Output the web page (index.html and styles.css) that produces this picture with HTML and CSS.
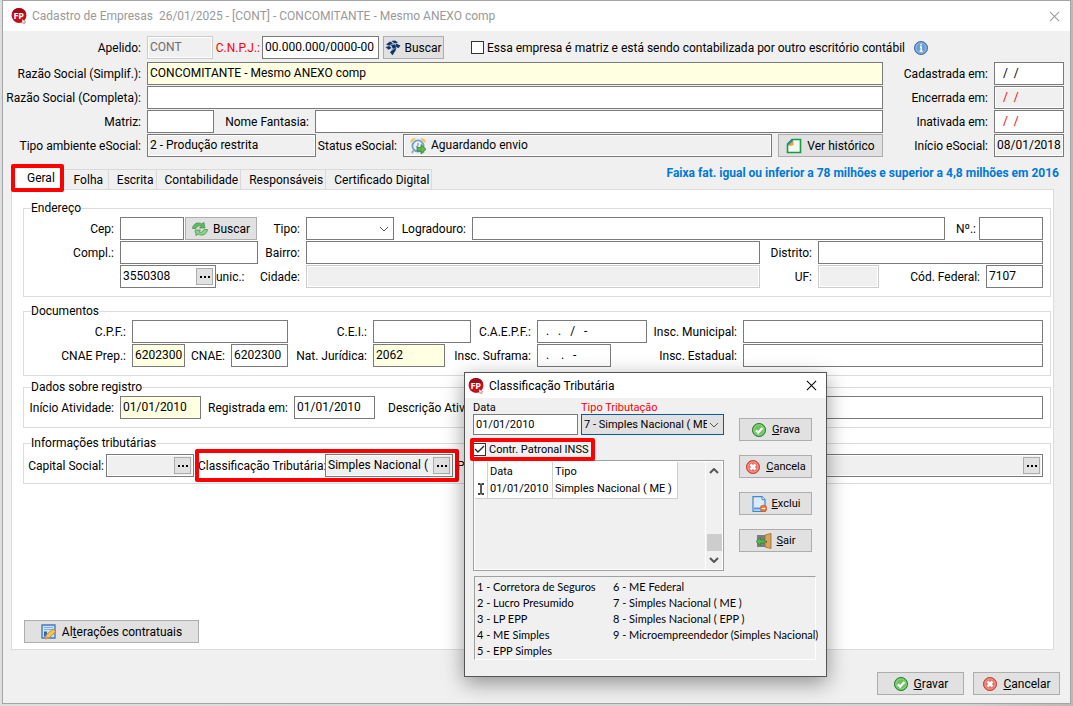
FILE: index.html
```
<!DOCTYPE html>
<html lang="pt-BR">

<head>
  <meta charset="UTF-8" />
  <meta name="viewport" content="width=device-width, initial-scale=1.0" />
  <title>Cadastro de Empresas</title>
  <link rel="stylesheet" href="styles.css">
</head>

<body>
  <!-- Shared icons -->
  <svg class="sprite" aria-hidden="true">
    <symbol id="logo" viewBox="0 0 16 16">
      <circle cx="8" cy="7.6" r="7.4" fill="#c4101c" />
      <path d="M1 5a7.400 7.400 0 0 1 14 0" fill="#a00c16" />
      <text x="2.400" y="11" font-family="Open Sans" font-weight="bold" font-size="9" fill="#fff">FP</text>
      <path d="M11 11l4 3-2 .2 1 1.600-1.200.2-.8-1.600-1 1z" fill="#fff" stroke="#a33" stroke-width=".4" />
    </symbol>
    <symbol id="ok" viewBox="0 0 16 16">
      <circle cx="8" cy="8" r="6.600" fill="#4fae46" stroke="#2f8a35" />
      <circle cx="8" cy="8" r="5.200" fill="#6cc25c" stroke="#a5dc98" stroke-width=".8" />
      <path d="M4.800 8.200l2.400 2.400 4.200-4.600" fill="none" stroke="#fff" stroke-width="2.200" />
    </symbol>
    <symbol id="cancel" viewBox="0 0 16 16">
      <circle cx="8" cy="8" r="6.600" fill="#e2574c" stroke="#cf4a42" />
      <circle cx="8" cy="8" r="5.200" fill="#ea6c60" stroke="#f6b0a8" stroke-width=".8" />
      <path d="M5.500 5.500l5 5M10.500 5.500l-5 5" stroke="#fff" stroke-width="2.600" />
    </symbol>
    <symbol id="close" viewBox="0 0 12 12">
      <path d="M1 1l10 10M11 1L1 11" fill="none" stroke="currentColor" stroke-width="1.100" />
    </symbol>
  </svg>

  <main class="window">
    <header class="titlebar">
      <svg class="icon"><use href="#logo" /></svg>
      <h1>Cadastro de Empresas&nbsp; 26/01/2025 - [CONT] - CONCOMITANTE - Mesmo ANEXO comp</h1>
      <button class="close" aria-label="Fechar"><svg><use href="#close" /></svg></button>
    </header>

    <section class="company">
      <div class="row row-id">
        <label for="apelido">Apelido:</label>
        <input id="apelido" value="CONT" disabled>
        <label for="cnpj" class="required">C.N.P.J.:</label>
        <input id="cnpj" value="00.000.000/0000-00">
        <button class="btn">
          <svg class="icon" viewBox="0 0 16 16">
            <path d="M1 4.500l4-3 3 1.800-4 2.400zM6.200 1l3.800-.6 3 2.200-3 .9zM11 3.600l4.500 2-2 2.600-3-1.600zM.5 7l4-1 2 2-3 1.800zM6 5l4-.8 1 3.800-3 1zM7 10.200l4.500-2.400-1 3-3 4.400-2.500-3z" fill="#12356b" />
            <path d="M4 6l5-3M6 10l5-2" stroke="#4f7fb0" stroke-width=".6" />
          </svg>
          Buscar
        </button>
        <span class="check">
          <input type="checkbox" id="matrizOutro">
          <label for="matrizOutro">Essa empresa é matriz e está sendo contabilizada por outro escritório contábil</label>
          <svg class="info" viewBox="0 0 14 14">
            <circle cx="7" cy="7" r="6.500" fill="#4c83bd" stroke="#3a6ba3" />
            <circle cx="7" cy="7" r="5.300" fill="#6ca0d5" stroke="#b4d0ee" stroke-width=".7" />
            <path d="M7 3v1.600M6 6h1.200v4M5.600 10.200h3" fill="none" stroke="#fff" stroke-width="1.500" />
          </svg>
        </span>
      </div>

      <div class="company-grid">
        <div class="rows">
          <div class="row row-razao">
            <label for="razao">Razão Social (Simplif.):</label>
            <input id="razao" class="key" value="CONCOMITANTE - Mesmo ANEXO comp">
          </div>
          <div class="row row-razao">
            <label for="razaoCompleta">Razão Social (Completa):</label>
            <input id="razaoCompleta">
          </div>
          <div class="row row-matriz">
            <label for="matriz">Matriz:</label>
            <input id="matriz">
            <label for="fantasia">Nome Fantasia:</label>
            <input id="fantasia">
          </div>
          <div class="row row-esocial">
            <label for="ambiente">Tipo ambiente eSocial:</label>
            <input id="ambiente" class="locked" value="2 - Produção restrita" readonly>
            <label for="status">Status eSocial:</label>
            <div class="box locked status">
              <svg class="icon" viewBox="0 0 16 16">
                <path d="M.5 5a4 4 0 0 1 5.500-4.500zM15.500 5a4 4 0 0 0-5.500-4.500z" fill="#f3c14b" />
                <path d="M3.500 12.500L2 15M12 13l2 2" stroke="#aaa" stroke-width="2" />
                <circle cx="8" cy="8" r="5.600" fill="#e6f1fa" stroke="#6d9fcd" stroke-width="1.800" />
                <path d="M8 5v3l-2 1" fill="none" stroke="#879" />
                <path d="M7 9.500h4v-3l5 4.800-5 4.700v-3H7z" fill="#5eb84a" stroke="#2f8330" stroke-width=".8" />
              </svg>
              <input id="status" value="Aguardando envio" readonly>
            </div>
            <button class="btn">
              <svg class="icon" viewBox="0 0 16 16">
                <path d="M6 1.500h8.500v13h-13V6z" fill="#f2f8ee" stroke="#149b44" stroke-width="1.600" />
                <path d="M1 7L7 1v3L4 7z" fill="#2f80c5" />
                <path d="M2 7.500l5.500-5v4.500l-3 1z" fill="#e7a23c" />
              </svg>
              Ver histórico
            </button>
          </div>
        </div>
        <div class="rows">
          <div class="row row-date"><label for="cadastrada">Cadastrada em:</label><input id="cadastrada" value="  /  /"></div>
          <div class="row row-date"><label for="encerrada">Encerrada em:</label><input id="encerrada" class="locked red" value="  /  /" readonly></div>
          <div class="row row-date"><label for="inativada">Inativada em:</label><input id="inativada" class="red" value="  /  /"></div>
          <div class="row row-date"><label for="inicioEsocial">Início eSocial:</label><input id="inicioEsocial" class="locked" value="08/01/2018" readonly></div>
        </div>
      </div>
    </section>

    <div class="tabs-bar">
      <div class="tabs" role="tablist">
        <button class="tab active marked" role="tab">Geral</button>
        <button class="tab" role="tab">Folha</button>
        <button class="tab" role="tab">Escrita</button>
        <button class="tab" role="tab">Contabilidade</button>
        <button class="tab" role="tab">Responsáveis</button>
        <button class="tab" role="tab">Certificado Digital</button>
      </div>
      <p class="range">Faixa fat. igual ou inferior a 78 milhões e superior a 4,8 milhões em 2016</p>
    </div>

    <section class="panel">
      <fieldset>
        <legend>Endereço</legend>
        <div class="row row-cep">
          <label for="cep">Cep:</label>
          <input id="cep">
          <button class="btn">
            <svg class="icon" viewBox="0 0 16 16">
              <path d="M.5 7.500C1 2.500 6 .5 10 3l1.800-1.800L13 7H7.500l1.600-1.800C7 4.200 5 5 4 7.500z" fill="#62b865" stroke="#3d9146" stroke-width=".7" />
              <path d="M15.500 8.500c-.5 5-5.500 7-9.500 4.500l-1.800 1.800L3 9h5.500l-1.600 1.800c2.100 1 4.100.2 5.100-2.300z" fill="#8bd08a" stroke="#3d9146" stroke-width=".7" />
            </svg>
            Buscar
          </button>
          <label for="tipo">Tipo:</label>
          <select id="tipo"><option></option></select>
          <label for="logradouro">Logradouro:</label>
          <input id="logradouro">
          <label for="numero">Nº.:</label>
          <input id="numero">
        </div>
        <div class="row row-bairro">
          <label for="compl">Compl.:</label>
          <input id="compl">
          <label for="bairro">Bairro:</label>
          <input id="bairro">
          <label for="distrito">Distrito:</label>
          <input id="distrito">
        </div>
        <div class="row row-cidade">
          <div class="box lookup"><input id="munic" value="3550308"><button class="dots" aria-label="Pesquisar município"></button></div>
          <label for="munic" class="munic">unic.:</label>
          <label for="cidade">Cidade:</label>
          <input id="cidade" disabled>
          <label for="uf">UF:</label>
          <input id="uf" disabled>
          <label for="codFederal">Cód. Federal:</label>
          <input id="codFederal" value="7107">
        </div>
      </fieldset>

      <fieldset class="documents">
        <legend>Documentos</legend>
        <div class="row row-cpf">
          <label for="cpf">C.P.F.:</label>
          <input id="cpf">
          <label for="cei">C.E.I.:</label>
          <input id="cei">
          <label for="caepf">C.A.E.P.F.:</label>
          <input id="caepf" value="  .   .   /   -">
          <label for="inscMunicipal">Insc. Municipal:</label>
          <input id="inscMunicipal">
        </div>
        <div class="row row-cnae">
          <label for="cnaePrep">CNAE Prep.:</label>
          <input id="cnaePrep" class="key" value="6202300">
          <label for="cnae">CNAE:</label>
          <input id="cnae" value="6202300">
          <label for="natureza">Nat. Jurídica:</label>
          <input id="natureza" class="key" value="2062">
          <label for="suframa">Insc. Suframa:</label>
          <input id="suframa" value="  .    .   -">
          <label for="inscEstadual">Insc. Estadual:</label>
          <input id="inscEstadual">
        </div>
      </fieldset>

      <fieldset class="registry">
        <legend>Dados sobre registro</legend>
        <div class="row row-registro">
          <label for="inicioAtividade">Início Atividade:</label>
          <input id="inicioAtividade" class="key" value="01/01/2010">
          <label for="registrada">Registrada em:</label>
          <input id="registrada" value="01/01/2010">
          <label for="descricao" class="start">Descrição Atividade:</label>
          <input id="descricao">
        </div>
      </fieldset>

      <fieldset class="taxes">
        <legend>Informações tributárias</legend>
        <div class="row row-tributos">
          <label for="capital">Capital Social:</label>
          <div class="box locked lookup"><input id="capital" readonly><button class="dots" aria-label="Capital social"></button></div>
          <div class="classif marked">
            <label for="classificacao">Classificação Tributária:</label>
            <div class="box locked lookup"><input id="classificacao" value="Simples Nacional (" readonly><button class="dots" aria-label="Classificação tributária"></button></div>
          </div>
          <label for="porte" class="start">Porte:</label>
          <div class="box locked lookup"><input id="porte" readonly><button class="dots" aria-label="Porte"></button></div>
        </div>
      </fieldset>

      <button class="btn changes">
        <svg class="icon" viewBox="0 0 16 16">
          <path d="M1 1h13v13H1z" fill="#cfe2f7" stroke="#3f7cc2" stroke-width="1.400" />
          <path d="M3 3.500h9M3 5.500h9" stroke="#83aedd" />
          <path d="M3 7.500h3v5H3z" fill="#2f66ad" />
          <path d="M4 15l1-4 7-6 3 2.500-7 6.500z" fill="#f7c54c" stroke="#b4762a" stroke-width=".8" />
          <path d="M4 15l1-4 3 3z" fill="#e39a76" />
        </svg>
        <span>Al<u>t</u>erações contratuais</span>
      </button>
    </section>

    <footer class="actions">
      <button class="btn"><svg class="icon"><use href="#ok" /></svg><span><u>G</u>ravar</span></button>
      <button class="btn"><svg class="icon"><use href="#cancel" /></svg><span><u>C</u>ancelar</span></button>
    </footer>
  </main>

  <div class="dialog" role="dialog" aria-labelledby="dialogTitle">
    <header class="titlebar">
      <svg class="icon"><use href="#logo" /></svg>
      <h2 id="dialogTitle">Classificação Tributária</h2>
      <button class="close" aria-label="Fechar"><svg><use href="#close" /></svg></button>
    </header>
    <div class="dialog-body">
      <div class="dialog-form">
        <div class="dialog-fields">
          <label for="dlgData">Data</label>
          <label for="dlgTipo" class="required">Tipo Tributação</label>
          <input id="dlgData" value="01/01/2010">
          <select id="dlgTipo"><option>7 - Simples Nacional ( ME )</option></select>
        </div>
        <span class="check marked">
          <input type="checkbox" id="patronal" checked>
          <label for="patronal">Contr. Patronal INSS</label>
        </span>
        <div class="history">
          <table>
            <tr><td></td><th>Data</th><th>Tipo</th></tr>
            <tr>
              <td><svg viewBox="0 0 8 12"><path d="M1 1h2.500M4.500 1H7M4 1.500v9M1 11h2.500M4.500 11H7" fill="none" stroke="#000" stroke-width="1.300" /></svg></td>
              <td>01/01/2010</td>
              <td>Simples Nacional ( ME )</td>
            </tr>
          </table>
          <div class="scrollbar">
            <svg viewBox="0 0 10 6"><path d="M1 5l4-4 4 4" fill="none" stroke="#555" stroke-width="2" /></svg>
            <span class="thumb"></span>
            <svg viewBox="0 0 10 6"><path d="M1 1l4 4 4-4" fill="none" stroke="#555" stroke-width="2" /></svg>
          </div>
        </div>
      </div>
      <div class="dialog-buttons">
        <button class="btn"><svg class="icon"><use href="#ok" /></svg><span><u>G</u>rava</span></button>
        <button class="btn"><svg class="icon"><use href="#cancel" /></svg><span><u>C</u>ancela</span></button>
        <button class="btn">
          <svg class="icon" viewBox="0 0 16 16">
            <path d="M2 .7h9l3 3v11.600H2z" fill="#dcebfa" stroke="#3f85cf" stroke-width="1.200" />
            <path d="M11 .7v3h3" fill="#fff" stroke="#3f85cf" />
            <path d="M3 12.500h6" stroke="#4d9be8" stroke-width="2" />
            <circle cx="12.500" cy="12.500" r="3.300" fill="#ee7430" stroke="#c8551d" stroke-width=".6" />
            <path d="M10.700 12.500h3.600" stroke="#fff" stroke-width="1.300" />
          </svg>
          <span><u>E</u>xclui</span>
        </button>
        <button class="btn">
          <svg class="icon" viewBox="0 0 16 16">
            <path d="M1 2h10v12H1z" fill="#7b7f80" />
            <path d="M9 2l6-1.500v15L9 14z" fill="#d9a35d" stroke="#9a6a2e" stroke-width=".8" />
            <path d="M10.500 8v1.500" stroke="#6b431a" />
            <path d="M0 8.500l4.500-4V7H9v3H4.500v2.500z" fill="#54b84e" stroke="#2c8232" stroke-width=".7" />
          </svg>
          <span><u>S</u>air</span>
        </button>
      </div>
      <div class="codes">
        <ul>
          <li>1 - Corretora de Seguros</li>
          <li>2 - Lucro Presumido</li>
          <li>3 - LP EPP</li>
          <li>4 - ME Simples</li>
          <li>5 - EPP Simples</li>
        </ul>
        <ul>
          <li>6 - ME Federal</li>
          <li>7 - Simples Nacional ( ME )</li>
          <li>8 - Simples Nacional ( EPP )</li>
          <li>9 - Microempreendedor (Simples Nacional)</li>
        </ul>
      </div>
    </div>
  </div>
</body>

</html>
```
FILE: styles.css
```
* {
  box-sizing: border-box;
}

body {
  margin: 0;
  padding: 0 2px 2px;
  min-height: 100vh;
  display: flex;
  background: linear-gradient(to right, #dedede, #d2d2d2 90%, #bcb8b2);
  font-family: Roboto, "Noto Sans", sans-serif;
  font-size: 12px;
  line-height: 16px;
  color: #000;
}

input,
select,
button {
  font: inherit;
  color: inherit;
  margin: 0;
  border-radius: 0;
}

h1,
h2,
p,
ul {
  margin: 0;
  padding: 0;
  font-size: inherit;
  font-weight: normal;
}

.sprite {
  position: absolute;
  width: 0;
  height: 0;
}

.icon {
  width: 16px;
  height: 16px;
  flex: none;
}

/* Windows */
.window {
  flex: 1;
  display: flex;
  flex-direction: column;
  min-width: 0;
  border: 1px solid #a5a5a5;
  background: #f0f0f0;
}

.titlebar {
  display: flex;
  align-items: center;
  gap: 5px;
  height: 30px;
  padding: 0 10px 0 8px;
  background: #fff;
  color: #999;
}

.titlebar h1,
.titlebar h2 {
  flex: 1;
  white-space: nowrap;
}

.close {
  display: flex;
  padding: 0;
  border: none;
  background: none;
}

.close svg {
  width: 11px;
  height: 11px;
}

/* Form controls */
input,
select,
.box {
  width: 100%;
  min-width: 0;
  height: 23px;
  padding: 0 2px 1px;
  border: 1px solid #7a7a7a;
  background: #fff;
  white-space: pre;
}

.key {
  background: #ffffe1;
}

.locked,
input:disabled {
  background: #f0f0f0;
  box-shadow: inset 0 0 0 1px #fff;
}

input:disabled {
  border-color: #ccc;
  color: #6d6d6d;
}

.red,
.required {
  color: #f00;
}

.box {
  display: flex;
  align-items: center;
  gap: 5px;
  padding: 0 2px;
}

.box input {
  height: 19px;
  padding: 0 0 1px;
  border: none;
  background: none;
}

select {
  appearance: none;
  background: #fff url("data:image/svg+xml,%3Csvg xmlns='http://www.w3.org/2000/svg' width='10' height='6'%3E%3Cpath d='M1 1l4 4 4-4' fill='none' stroke='%23555'/%3E%3C/svg%3E") no-repeat right 4px center;
}

.btn {
  display: flex;
  align-items: center;
  justify-content: center;
  gap: 5px;
  height: 23px;
  padding: 0 2px;
  border: 1px solid #adadad;
  background: #e1e1e1;
  white-space: nowrap;
}

.dots {
  flex: none;
  width: 17px;
  height: 17px;
  padding: 0;
  border: 1px solid #adadad;
  background: linear-gradient(to right, #000 2px, transparent 2px 4px, #000 4px 6px, transparent 6px 8px, #000 8px) center / 10px 2px no-repeat #e1e1e1;
}

.check {
  display: flex;
  align-items: center;
  gap: 3px;
  white-space: nowrap;
}

input[type="checkbox"] {
  appearance: none;
  flex: none;
  width: 13px;
  height: 13px;
  padding: 0;
  border: 1px solid #333;
}

input[type="checkbox"]:checked {
  background: #fff url("data:image/svg+xml,%3Csvg xmlns='http://www.w3.org/2000/svg' width='11' height='11'%3E%3Cpath d='M1 5l3 3 6-6' fill='none' stroke='%23222' stroke-width='1.300'/%3E%3C/svg%3E") center no-repeat;
}

/* Red frames that point out the steps */
.marked {
  position: relative;
}

.marked::after {
  content: "";
  position: absolute;
  inset: -5px -6px -5px -3px;
  border: 4px solid #f00;
  border-radius: 2px;
  pointer-events: none;
}

/* Rows */
.rows {
  display: grid;
  gap: 1px;
}

.row {
  display: grid;
  align-items: center;
}

.row > label {
  padding-right: 6px;
  text-align: right;
  white-space: nowrap;
}

.row > .start {
  text-align: left;
}

.company {
  padding: 5px 6px 0 0;
}

.row-id {
  grid-template-columns: 144px 66px 49px 117px 61px 1fr;
  margin-bottom: 3px;
}

.row-id > label.required {
  padding-right: 2px;
}

.row-id > .btn {
  margin: 0 -4px 0 4px;
  gap: 3px;
}

.row-id .check {
  margin-left: 31px;
}

.info {
  width: 14px;
  height: 14px;
  margin-left: 6px;
}

.company-grid {
  display: grid;
  grid-template-columns: 1fr 181px;
}

.row-razao {
  grid-template-columns: 144px 1fr;
}

.row-matriz {
  grid-template-columns: 144px 67px 101px 1fr;
}

.row-esocial {
  grid-template-columns: 144px 169px 87px 1fr 111px;
}

.row-esocial > .btn {
  margin-left: 6px;
}

.status {
  padding-left: 6px;
}

.row-date {
  grid-template-columns: 111px 70px;
}

/* Tabs */
.tabs-bar {
  display: flex;
  justify-content: space-between;
  margin-top: 8px;
  padding: 0 11px 0 10px;
}

.tabs {
  display: flex;
  align-items: flex-end;
}

.tab {
  min-width: 46px;
  height: 20px;
  padding: 0 2px 0 8px;
  border: 1px solid #d9d9d9;
  border-width: 1px 1px 0 0;
  background: #f0f0f0;
  white-space: nowrap;
}

.tab.active {
  height: 24px;
  padding: 0 7px 0 14px;
  background: #fff;
}

.tab.marked::after {
  inset: -2px -2px -3px -2px;
}

.range {
  font-weight: bold;
  color: #0078d7;
}

.panel {
  flex: 1;
  display: flex;
  flex-direction: column;
  margin: 0 16px 0 8px;
  padding: 12px 2px 6px 11px;
  border: 1px solid #dcdcdc;
  background: #fff;
}

/* Groups */
fieldset {
  display: grid;
  gap: 1px;
  min-width: 0;
  margin: 0 0 8px;
  padding: 2px 7px 8px 0;
  border: 1px solid #dcdcdc;
}

fieldset.documents {
  margin-bottom: 5px;
}

fieldset.registry {
  margin-bottom: 9px;
}

fieldset.taxes {
  padding: 4px 7px 6px 0;
}

legend {
  margin-left: 7px;
  padding: 0;
  line-height: 13px;
}

.row-cep {
  grid-template-columns: 96px 64px 73px 49px 88px 78px 1fr 34px 64px;
}

.row-cep > .btn {
  margin-left: 1px;
}

.row-cep > label:nth-last-child(2) {
  padding-right: 3px;
}

.row-bairro {
  grid-template-columns: 96px 138px 48px 1fr 58px 225px;
}

.row-cidade {
  grid-template-columns: 96px 26px 64px 1fr 58px 61px 107px 57px;
  padding-left: 96px;
}

.row-cidade > .munic {
  padding-right: 0;
}

.row-cpf {
  grid-template-columns: 108px 156px 85px 98px 66px 110px 96px 1fr;
}

.row-cnae {
  grid-template-columns: 108px 53px 46px 57px 85px 72px 92px 74px 132px 1fr;
}

.row-registro {
  grid-template-columns: 96px 81px 93px 81px 13px 120px 1fr;
}

.row-registro > .start {
  grid-column: 6;
}

.row-tributos {
  grid-template-columns: 82px 88px 259px 4px 50px 1fr;
}

.row-tributos > label {
  padding-right: 2px;
}

.row-tributos > .start {
  grid-column: 5;
}

.classif {
  display: grid;
  grid-template-columns: 127px 1fr;
  align-items: center;
  margin-left: 4px;
  white-space: nowrap;
}

.changes {
  width: 175px;
  margin: auto 0 0 1px;
}

.actions {
  display: flex;
  justify-content: flex-end;
  gap: 9px;
  padding: 22px 10px 8px;
}

.actions .btn {
  width: 87px;
}

/* Dialog floating over the main window */
.dialog {
  position: absolute;
  left: 464px;
  top: 372px;
  width: 363px;
  border: 1px solid #555;
  background: #f0f0f0;
  box-shadow: 0 6px 20px rgba(0, 0, 0, 0.4);
}

.dialog .titlebar {
  height: 25px;
  padding: 0 9px 0 3px;
  color: #000;
}

.dialog-body {
  display: grid;
  grid-template-columns: 251px 73px;
  column-gap: 15px;
  padding: 3px 10px 16px 8px;
  font-size: 11px;
  line-height: 13px;
}

.dialog-fields {
  display: grid;
  grid-template-columns: 105px 143px;
  column-gap: 3px;
}

.dialog-fields input,
.dialog-fields select {
  height: 21px;
}

.dialog-fields select {
  padding-right: 16px;
  border-color: #0a5a9e;
  background-color: #e1e1e1;
}

.dialog-form .check {
  width: 116px;
  height: 13px;
  margin: 8px 0 4px;
}

.history {
  display: flex;
  justify-content: space-between;
  height: 111px;
  padding: 1px;
  border: 1px solid #a0a0a0;
  box-shadow: inset 0 0 0 1px #fff;
}

table {
  border-collapse: collapse;
  align-self: flex-start;
  background: #fff;
}

td,
th {
  height: 18px;
  padding: 0 2px;
  border-right: 1px solid #d0d0d0;
  font-weight: normal;
  text-align: left;
  white-space: nowrap;
}

td:first-child {
  width: 12px;
}

td:nth-child(2) {
  width: 65px;
}

td:last-child {
  width: 125px;
}

tr:last-child td {
  border-bottom: 1px solid #d0d0d0;
}

td svg {
  display: block;
  width: 8px;
  height: 12px;
}

.scrollbar {
  display: flex;
  flex-direction: column;
  align-items: center;
  width: 17px;
  padding: 6px 0;
  border-left: 1px solid #fff;
}

.scrollbar svg {
  width: 10px;
  height: 6px;
}

.thumb {
  width: 15px;
  height: 17px;
  margin: auto 0 6px;
  background: #cdcdcd;
}

.dialog-buttons {
  display: grid;
  align-content: start;
  gap: 14px;
  padding-top: 17px;
}

.codes {
  grid-column: 1 / -1;
  display: grid;
  grid-template-columns: 136px 1fr;
  margin: 5px -4px 0 1px;
  padding: 2px 2px 0;
  border: 1px solid #a0a0a0;
  border-color: #a0a0a0 #fff #fff #a0a0a0;
  font-family: Lato, sans-serif;
  line-height: 16px;
  white-space: nowrap;
}

.codes ul {
  list-style: none;
}
```
